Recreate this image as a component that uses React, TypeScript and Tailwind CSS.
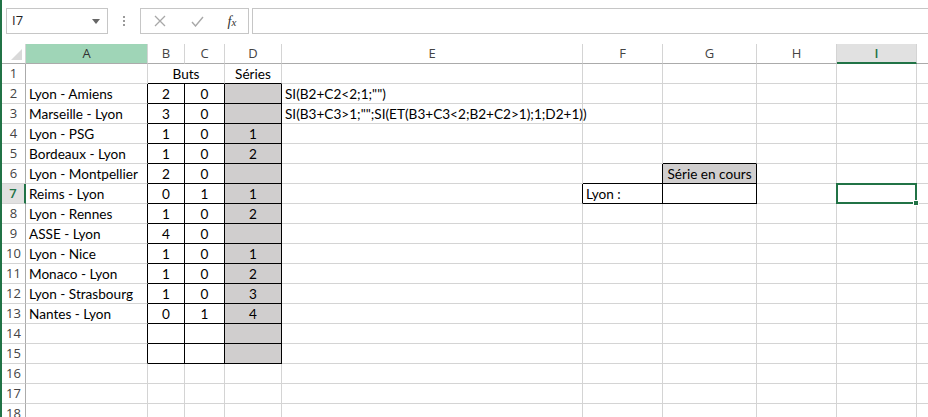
import React from "react";

const COLS = ["A", "B", "C", "D", "E", "F", "G", "H", "I", ""];
const NROWS = 18;

type CellDef = { t?: string; center?: boolean };

const cells: Record<string, CellDef> = {
  D1: { t: "Séries", center: true },
  E2: { t: 'SI(B2+C2<2;1;"")' },
  E3: { t: 'SI(B3+C3>1;"";SI(ET(B3+C3<2;B2+C2>1);1;D2+1))' },
  G6: { t: "Série en cours", center: true },
  F7: { t: "Lyon :" },
};

const games: [string, string, string, string][] = [
  ["Lyon - Amiens", "2", "0", ""],
  ["Marseille - Lyon", "3", "0", ""],
  ["Lyon - PSG", "1", "0", "1"],
  ["Bordeaux - Lyon", "1", "0", "2"],
  ["Lyon - Montpellier", "2", "0", ""],
  ["Reims - Lyon", "0", "1", "1"],
  ["Lyon - Rennes", "1", "0", "2"],
  ["ASSE - Lyon", "4", "0", ""],
  ["Lyon - Nice", "1", "0", "1"],
  ["Monaco - Lyon", "1", "0", "2"],
  ["Lyon - Strasbourg", "1", "0", "3"],
  ["Nantes - Lyon", "0", "1", "4"],
];
games.forEach((g, i) => {
  const r = i + 2;
  cells["A" + r] = { t: g[0] };
  cells["B" + r] = { t: g[1], center: true };
  cells["C" + r] = { t: g[2], center: true };
  cells["D" + r] = { t: g[3], center: true };
});

// c: 1..10 (A..J)
function boxed(r: number, c: number): boolean {
  if (r >= 2 && r <= 15 && c >= 2 && c <= 4) return true;
  if (r === 7 && c === 6) return true;
  if ((r === 6 || r === 7) && c === 7) return true;
  return false;
}
function filled(r: number, c: number): boolean {
  if (c === 4 && r >= 2 && r <= 15) return true;
  if (r === 6 && c === 7) return true;
  return false;
}

function NameBox() {
  return (
    <div className="flex h-[26px] w-[102px] items-center justify-between border border-[#c6c6c6] bg-white pl-[5px] pr-[7px]">
      <span className="font-['Open_Sans'] text-[13px] text-[#222]">I7</span>
      <svg width="8" height="5" viewBox="0 0 8 5">
        <path d="M0 0 L8 0 L4 5 Z" fill="#666" />
      </svg>
    </div>
  );
}

function FormulaBar() {
  return (
    <div className="flex h-[44px] shrink-0 items-start pt-[8px] pl-[4px]">
      <NameBox />
      <div className="flex h-[26px] w-[32px] flex-col items-center justify-center gap-[2px]">
        <div className="h-[2px] w-[2px] bg-[#9a9a9a]" />
        <div className="h-[2px] w-[2px] bg-[#9a9a9a]" />
        <div className="h-[2px] w-[2px] bg-[#9a9a9a]" />
      </div>
      <div className="flex h-[26px] w-[109px] items-center border border-[#c6c6c6] bg-white">
        <div className="flex w-[37px] justify-center">
          <svg width="12" height="12" viewBox="0 0 12 12">
            <path d="M1 1 L11 11 M11 1 L1 11" stroke="#a8a8a8" strokeWidth="1.3" fill="none" />
          </svg>
        </div>
        <div className="flex w-[38px] justify-center">
          <svg width="13" height="11" viewBox="0 0 13 11">
            <path d="M1 6 L4.5 10 L12 1" stroke="#a8a8a8" strokeWidth="1.4" fill="none" />
          </svg>
        </div>
        <div className="flex flex-1 justify-center">
          <span className="font-['Liberation_Serif'] text-[14px] italic text-[#333]">
            f<span className="text-[11px]">x</span>
          </span>
        </div>
      </div>
      <div className="ml-[3px] h-[26px] flex-1 border-y border-l border-[#c6c6c6] bg-white" />
    </div>
  );
}

export default function App() {
  const colWidths = "grid-cols-[24px_122px_37px_40px_57px_301px_80px_94px_80px_80px_1fr]";
  const items: React.ReactNode[] = [];

  // header row
  items.push(
    <div key="corner" className="relative h-[20px] border-b border-r border-b-[#ababab] border-r-[#d4d4d4] bg-white">
      <svg className="absolute bottom-[3px] right-[3px]" width="11" height="11" viewBox="0 0 11 11">
        <path d="M11 0 L11 11 L0 11 Z" fill="#d9d9d9" />
      </svg>
    </div>
  );
  COLS.forEach((l, i) => {
    const isA = l === "A";
    const isI = l === "I";
    const last = l === "";
    items.push(
      <div
        key={"h" + i}
        className={
          "flex h-[20px] items-center justify-center font-['Open_Sans'] text-[13px] " +
          (isA
            ? "border-b border-r border-b-[#ababab] border-r-[#d4d4d4] bg-[#9fd5b7] text-[#333]"
            : isI
            ? "border-b-2 border-r border-b-[#217346] border-r-[#d4d4d4] bg-[#e1e1e1] pt-[1px] font-semibold text-[#217346]"
            : last
            ? "border-b border-b-[#ababab] bg-white"
            : "border-b border-r border-b-[#ababab] border-r-[#d4d4d4] bg-white text-[#444]")
        }
      >
        {l}
      </div>
    );
  });

  for (let r = 1; r <= NROWS; r++) {
    const sel = r === 7;
    items.push(
      <div
        key={"rh" + r}
        className={
          "flex h-[20px] items-center justify-center border-b font-['Open_Sans'] text-[13px] " +
          (sel
            ? "border-r-2 border-b-[#d4d4d4] border-r-[#217346] bg-[#e1e1e1] font-semibold text-[#217346]"
            : "border-r border-b-[#d4d4d4] border-r-[#ababab] bg-white text-[#444]")
        }
      >
        {r}
      </div>
    );
    for (let c = 1; c <= 10; c++) {
      const name = COLS[c - 1] + r;
      if (r === 1 && c === 2) {
        items.push(
          <div
            key={name}
            className="col-span-2 flex h-[20px] items-center justify-center border-b border-r border-b-black border-r-[#d4d4d4] font-['Lato'] text-[13.6px] leading-none text-black"
          >
            <span className="pt-[2px]">Buts</span>
          </div>
        );
        continue;
      }
      if (r === 1 && c === 3) continue;
      const def = cells[name];
      const rBlack = boxed(r, c) || boxed(r, c + 1);
      const bBlack = boxed(r, c) || boxed(r + 1, c);
      const isSel = r === 7 && c === 9;
      const last = c === 10;
      items.push(
        <div
          key={name}
          className={
            "relative flex h-[20px] items-center whitespace-nowrap border-b font-['Lato'] text-[13.6px] leading-none text-black " +
            (last ? "" : "border-r ") +
            (rBlack ? "border-r-black " : "border-r-[#d4d4d4] ") +
            (bBlack ? "border-b-black " : "border-b-[#d4d4d4] ") +
            (filled(r, c) ? "bg-[#d0cece] " : "") +
            (def?.center ? "justify-center " : "pl-[3px] ")
          }
        >
          {def?.t ? <span className="relative z-10 pt-[2px]">{def.t}</span> : null}
          {isSel ? (
            <div className="absolute -bottom-[1px] -left-[1px] -right-[1px] -top-[1px] z-20 border-2 border-[#217346]">
              <div className="absolute -bottom-[4px] -right-[4px] h-[6px] w-[6px] border border-white bg-[#217346]" />
            </div>
          ) : null}
        </div>
      );
    }
  }

  return (
    <div className="flex h-[417px] w-[928px] overflow-hidden bg-white">
      <div className="w-[2px] shrink-0 bg-[#217346]" />
      <div className="flex min-w-0 flex-1 flex-col">
        <FormulaBar />
        <div className={"grid shrink-0 " + colWidths}>{items}</div>
      </div>
    </div>
  );
}
